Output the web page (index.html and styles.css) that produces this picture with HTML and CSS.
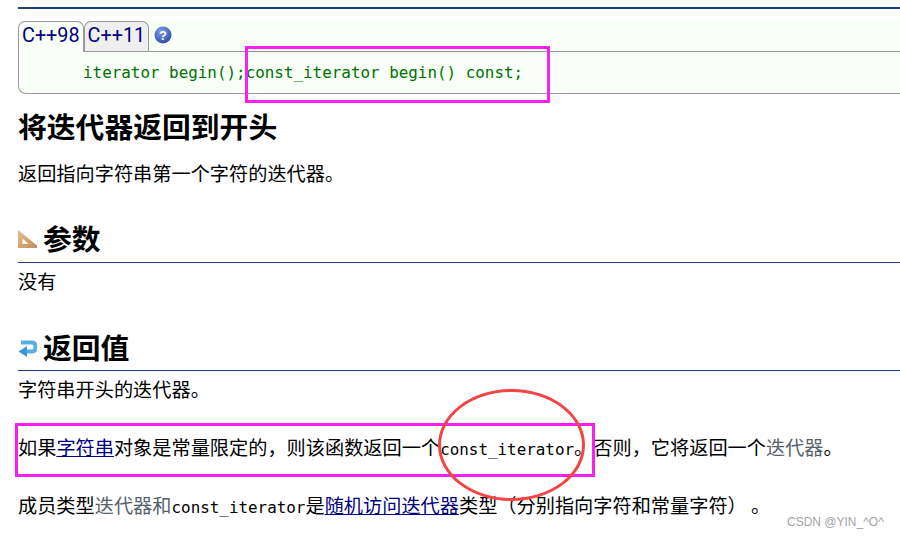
FILE: index.html
```html
<!DOCTYPE html>
<html lang="zh">
<head>
<meta charset="utf-8">
<title>begin</title>
<link rel="stylesheet" href="styles.css">
</head>
<body>
<div class="page">
  <div class="proto">
    <div class="tabs">
      <span class="tab active">C++98</span>
      <span class="tab">C++11</span>
      <svg class="help" width="18" height="18" viewBox="0 0 18 18"><defs><radialGradient id="hg" cx="40%" cy="30%" r="75%"><stop offset="0" stop-color="#7f9fe8"/><stop offset="1" stop-color="#2a4aa8"/></radialGradient></defs><circle cx="9" cy="9" r="8.5" fill="url(#hg)"/><text x="9" y="14" text-anchor="middle" class="help-q">?</text></svg>
    </div>
    <div class="code"><span>iterator begin();</span><span>const_iterator begin() const;</span></div>
  </div>
  <h1>将迭代器返回到开头</h1>
  <p class="intro">返回指向字符串第一个字符的迭代器。</p>
  <h2 class="params">
    <svg width="19" height="18" viewBox="0 0 19 18"><defs><linearGradient id="tg" x1="0" y1="0" x2="1" y2="1"><stop offset="0" stop-color="#e6bd90"/><stop offset="1" stop-color="#c48d58"/></linearGradient></defs><path d="M0 0 L19 15.5 V18 H0 Z" fill="url(#tg)"/><path d="M4.5 8.5 L10.5 14 H4.5 Z" fill="#fff"/></svg>
    <span>参数</span>
  </h2>
  <p class="none">没有</p>
  <h2 class="returns">
    <svg width="19" height="18" viewBox="0 0 19 18"><path d="M3 3.5 H14 Q17.5 3.5 17.5 8 Q17.5 12.5 14 12.5 H8" fill="none" stroke="#5aaee8" stroke-width="4"/><path d="M9 7 L0.5 12.5 L9 18 Z" fill="#3d94dc"/></svg>
    <span>返回值</span>
  </h2>
  <p class="ret1">字符串开头的迭代器。</p>
  <p class="ret2">如果<a href="#">字符串</a>对象是常量限定的，则该函数返回一个<code>const_iterator</code>。否则，它将返回一个<span class="type">迭代器</span>。</p>
  <p class="ret3">成员类型<span class="type">迭代器</span><span class="type">和</span><code>const_iterator</code>是<a href="#">随机访问迭代器</a>类型（分别指向字符和常量字符） 。</p>
</div>
<div class="mark mark-code"></div>
<div class="mark mark-line"></div>
<div class="circle"></div>
<div class="watermark">CSDN @YIN_^O^</div>
</body>
</html>
```
FILE: styles.css
```css
html, body { margin: 0; padding: 0; background: #fff; }
body { width: 900px; height: 537px; overflow: hidden; position: relative; font-family: "Noto Sans CJK SC", "Liberation Sans", sans-serif; color: #000; }
.page { padding: 7px 0 0 18px; }
.proto { border-top: 2px solid #1f3f7f; padding-top: 12px; }
.tabs { display: flex; align-items: center; height: 30px; background: #f7fff7; }
.tab { box-sizing: border-box; height: 30px; padding: 0 3px; border: 1px solid #999; border-bottom: none; border-radius: 7px 7px 0 0; font: 19.8px/28px Roboto, "Liberation Sans", sans-serif; color: #000080; background: #efefef; }
.tab.active { background: #f7fff7; height: 31px; margin-bottom: -1px; position: relative; z-index: 1; }
.help { margin: 0 0 2px 5px; }
.help-q { font: bold 13px "Liberation Sans", sans-serif; fill: #fff; }
.code { box-sizing: border-box; height: 43px; background: #f7fff7; border: 1px solid #999; border-right: none; border-radius: 0 0 0 8px; padding-left: 64px; font: 15.9px/41px "DejaVu Sans Mono", monospace; color: #007000; white-space: pre; }
h1 { margin: 12px 0 0; font-size: 28.8px; line-height: 40px; font-weight: 700; }
.intro { margin: 14px 0 0; font-size: 19.2px; line-height: 26px; }
h2 { display: flex; align-items: center; gap: 6px; margin: 0; font-size: 28.8px; line-height: 40px; font-weight: 700; border-bottom: 1px solid #1f3f7f; height: 44px; box-sizing: border-box; }
h2 span { position: relative; top: -1px; }
.params { margin-top: 31px; height: 46px; padding-bottom: 2px; }
.returns { margin-top: 32px; height: 45px; }
p { white-space: nowrap; }
.none { margin: 5px 0 0; font-size: 19.2px; line-height: 26px; }
.ret1 { margin: 5px 0 0; font-size: 19.2px; line-height: 26px; }
.ret2 { margin: 32px 0 0; font-size: 19.2px; line-height: 26px; }
.ret3 { margin: 32px 0 0; font-size: 19.2px; line-height: 26px; }
a { color: #000080; text-decoration: underline; }
code { font: 15.9px "DejaVu Sans Mono", monospace; }
.type { color: #55606a; }
.mark { position: absolute; box-sizing: border-box; border: 3px solid #f81ff0; }
.mark-code { left: 245px; top: 46px; width: 305px; height: 57px; }
.mark-line { left: 15px; top: 423px; width: 580px; height: 54px; }
.circle { position: absolute; left: 438px; top: 389px; width: 147px; height: 112px; box-sizing: border-box; border: 3px solid #f44545; border-radius: 50%; }
.watermark { position: absolute; left: 787px; top: 515px; font: 12px/14px "Liberation Sans", sans-serif; color: #a3a3a3; }
```
